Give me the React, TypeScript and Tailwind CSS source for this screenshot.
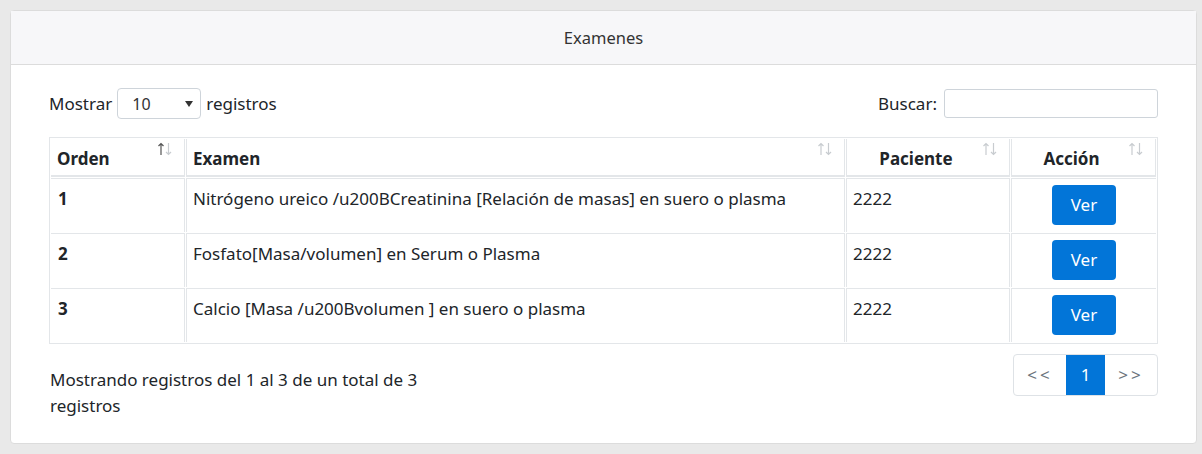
import { useState } from "react";

const rows = [
  { orden: 1, examen: "Nitrógeno ureico /u200BCreatinina [Relación de masas] en suero o plasma", paciente: "2222" },
  { orden: 2, examen: "Fosfato[Masa/volumen] en Serum o Plasma", paciente: "2222" },
  { orden: 3, examen: "Calcio [Masa /u200Bvolumen ] en suero o plasma", paciente: "2222" },
];

function SortIcon({ active = false }: { active?: boolean }) {
  return (
    <svg
      className="pointer-events-none absolute right-[12px] top-[3px]"
      width="14"
      height="14"
      viewBox="0 0 14 14"
      fill="none"
      strokeWidth="1.2"
    >
      <path d="M3 13V1.5M0.5 4L3 1.5L5.5 4" stroke={active ? "#555" : "#c8ccd0"} />
      <path d="M10.5 1V12.5M8 10L10.5 12.5L13 10" stroke="#c8ccd0" />
    </svg>
  );
}

export default function App() {
  const [search, setSearch] = useState("");

  return (
    <div className="min-h-[454px] bg-[#e9e9e9] pl-[10px] pr-[5px] pt-[10px] pb-[10px] font-['Noto_Sans',sans-serif] text-[17px] leading-6 text-[#212529]">
      <div className="rounded-[4px] border border-[#dcdcdc] bg-white">
        <div className="flex h-[54px] items-center justify-center border-b border-[#dcdcdc] bg-[#f7f7f9] text-[16.5px] text-[#333]">
          Examenes
        </div>

        <div className="px-[38px] pt-[23px] pb-[24px]">
          <div className="flex items-center justify-between">
            <label className="flex items-center gap-[5px]">
              Mostrar
              <span className="relative">
                <select className="h-[31px] w-[84px] appearance-none rounded-[4px] border border-[#ced4da] bg-white pl-[14px] text-[16px] text-[#333] outline-none">
                  <option>10</option>
                  <option>25</option>
                  <option>50</option>
                  <option>100</option>
                </select>
                <svg className="pointer-events-none absolute right-[8px] top-[13px]" width="8" height="6" viewBox="0 0 8 6">
                  <path d="M0 0h8L4 6z" fill="#333" />
                </svg>
              </span>
              registros
            </label>
            <label className="flex items-center gap-[7px]">
              Buscar:
              <input
                value={search}
                onChange={(e) => setSearch(e.target.value)}
                className="h-[29px] w-[214px] rounded-[3px] border border-[#ced4da] px-2 outline-none"
              />
            </label>
          </div>

          <table className="mt-[18px] w-full border-separate [border-spacing:1px] border border-[#e3e6e9]">
            <thead>
              <tr>
                <th className="relative w-[134px] border-b-2 border-r border-[#e3e6e9] px-[6px] pt-[8px] pb-[4px] pr-[30px] text-left font-bold">
                  Orden
                  <SortIcon active />
                </th>
                <th className="relative w-[659px] border-b-2 border-x border-[#e3e6e9] px-[6px] pt-[8px] pb-[4px] pr-[30px] text-left font-bold">
                  Examen
                  <SortIcon />
                </th>
                <th className="relative w-[164px] border-b-2 border-x border-[#e3e6e9] px-[6px] pt-[8px] pb-[4px] pr-[30px] text-center font-bold">
                  Paciente
                  <SortIcon />
                </th>
                <th className="relative border-b-2 border-l border-r border-[#e3e6e9] px-[6px] pt-[8px] pb-[4px] pr-[30px] text-center font-bold">
                  Acción
                  <SortIcon />
                </th>
              </tr>
            </thead>
            <tbody>
              {rows.map((r) => (
                <tr key={r.orden}>
                  <td className="border-t border-r border-[#e3e6e9] pl-[7px] pr-[6px] pt-[8px] align-top font-bold">{r.orden}</td>
                  <td className="border-t border-x border-[#e3e6e9] px-[6px] pt-[8px] align-top">{r.examen}</td>
                  <td className="border-t border-x border-[#e3e6e9] px-[6px] pt-[8px] align-top">{r.paciente}</td>
                  <td className="border-t border-l border-[#e3e6e9] px-[6px] pt-[6px] pb-[7px] text-center align-top">
                    <button className="h-[40px] w-[64px] rounded-[4px] bg-[#0275d8] text-white">Ver</button>
                  </td>
                </tr>
              ))}
            </tbody>
          </table>

          <div className="mt-[10px] flex items-start justify-between">
            <p className="w-[420px] pt-[13px] pl-px leading-[26px]">
              Mostrando registros del 1 al 3 de un total de 3 registros
            </p>
            <ul className="flex h-[42px] overflow-hidden rounded-[4px] border border-[#dee2e6]">
              <li className="flex w-[52px] items-center justify-center text-[#6c757d] tracking-[3px]">&lt;&lt;</li>
              <li className="flex w-[39px] items-center justify-center bg-[#0275d8] text-white">1</li>
              <li className="flex w-[52px] items-center justify-center text-[#6c757d] tracking-[3px]">&gt;&gt;</li>
            </ul>
          </div>
        </div>
      </div>
    </div>
  );
}
